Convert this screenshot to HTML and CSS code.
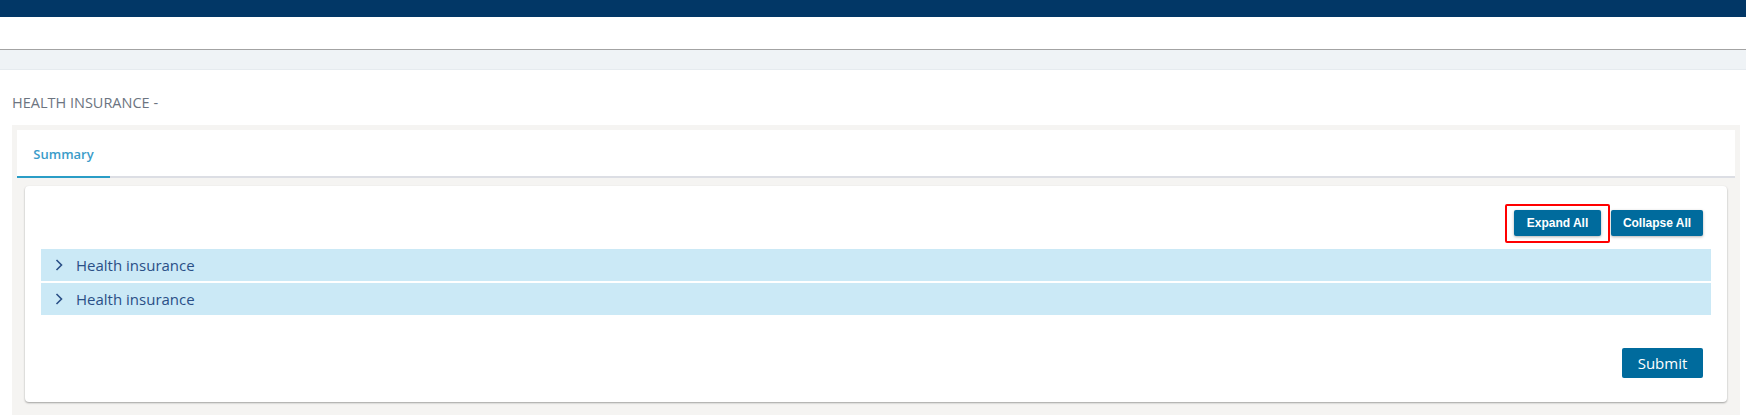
FILE: index.html
```html
<!DOCTYPE html>
<html lang="en">
<head>
<meta charset="utf-8">
<title>Health Insurance</title>
<link rel="stylesheet" href="styles.css">
</head>
<body>
<div class="topbar"></div>
<div class="navbar"></div>
<div class="subbar"></div>
<main class="main">
  <h1 class="page-title">HEALTH INSURANCE -</h1>
  <div class="panel">
    <div class="tabs">
      <div class="tab tab-active">Summary</div>
    </div>
    <div class="card">
      <div class="toolbar">
        <div class="btn-wrap">
          <button class="btn btn-sm">Expand All</button>
          <span class="highlight"></span>
        </div>
        <button class="btn btn-sm">Collapse All</button>
      </div>
      <div class="accordion">
        <div class="acc-row">
          <svg class="chev" width="8" height="12" viewBox="0 0 8 12"><path d="M1.5 1 L6.5 6 L1.5 11" fill="none" stroke="#2a4f86" stroke-width="1.6"/></svg>
          <span class="acc-label">Health insurance</span>
        </div>
        <div class="acc-row">
          <svg class="chev" width="8" height="12" viewBox="0 0 8 12"><path d="M1.5 1 L6.5 6 L1.5 11" fill="none" stroke="#2a4f86" stroke-width="1.6"/></svg>
          <span class="acc-label">Health insurance</span>
        </div>
      </div>
      <div class="footer">
        <button class="btn btn-submit">Submit</button>
      </div>
    </div>
  </div>
</main>
</body>
</html>
```
FILE: styles.css
```css
* { box-sizing: border-box; }
html, body { margin: 0; padding: 0; }
body {
  background: #ffffff;
  font-family: "Open Sans", "Noto Sans", sans-serif;
  overflow: hidden;
}
.topbar { height: 17px; background: #023766; }
.navbar { height: 33px; background: #ffffff; border-bottom: 1px solid #a3a3a3; }
.subbar { height: 20px; background: #eff3f6; border-bottom: 1px solid #e6ebef; }
.main { padding: 0 6px 0 12px; }
.page-title {
  margin: 0;
  padding: 22px 0 11px 0;
  font-size: 14.5px;
  line-height: 22px;
  font-weight: 400;
  color: #6c7480;
  letter-spacing: 0;
}
.panel {
  background: #f5f4f2;
  padding: 5px 5px 14px 5px;
}
.tabs {
  display: flex;
  background: #ffffff;
  height: 48px;
  border-bottom: 2px solid #dcdee4;
}
.tab {
  width: 93px;
  display: flex;
  align-items: center;
  justify-content: center;
  font-size: 13px;
  font-weight: 600;
  color: #3a9cc9;
  margin-bottom: -2px;
  padding-top: 1px;
}
.tab-active { border-bottom: 2px solid #2a9dc6; }
.card {
  margin: 8px 8px 0 8px;
  background: #ffffff;
  border-radius: 4px;
  box-shadow: 0 1px 2px rgba(0,0,0,0.35);
  padding: 24px 16px 24px 16px;
}
.toolbar {
  display: flex;
  justify-content: flex-end;
  gap: 10px;
  padding-right: 8px;
  margin-bottom: 13px;
}
.btn-wrap { position: relative; display: flex; }
.highlight {
  position: absolute;
  left: -9px; top: -6px; right: -9px; bottom: -7px;
  border: 2px solid #ff0000;
  border-radius: 2px;
  pointer-events: none;
}
.btn {
  border: 0;
  background: #006b9d;
  color: #ffffff;
  border-radius: 2px;
  cursor: pointer;
}
.btn-sm {
  height: 26px;
  font-family: "Liberation Sans", Arial, sans-serif;
  font-weight: 700;
  font-size: 12px;
  box-shadow: 0 1px 3px rgba(0,0,0,0.3);
}
.toolbar .btn-wrap .btn { width: 87px; }
.toolbar > .btn { width: 92px; }
.accordion { display: flex; flex-direction: column; gap: 2px; }
.acc-row {
  height: 32px;
  background: #cbe9f6;
  display: flex;
  align-items: center;
  padding-left: 14px;
}
.chev { flex: none; }
.acc-label {
  margin-left: 13px;
  font-size: 15px;
  color: #2a4f86;
}
.footer {
  display: flex;
  justify-content: flex-end;
  padding-right: 8px;
  margin-top: 33px;
}
.btn-submit {
  height: 30px;
  width: 81px;
  font-family: "Open Sans", "Noto Sans", sans-serif;
  font-size: 15px;
}
```
